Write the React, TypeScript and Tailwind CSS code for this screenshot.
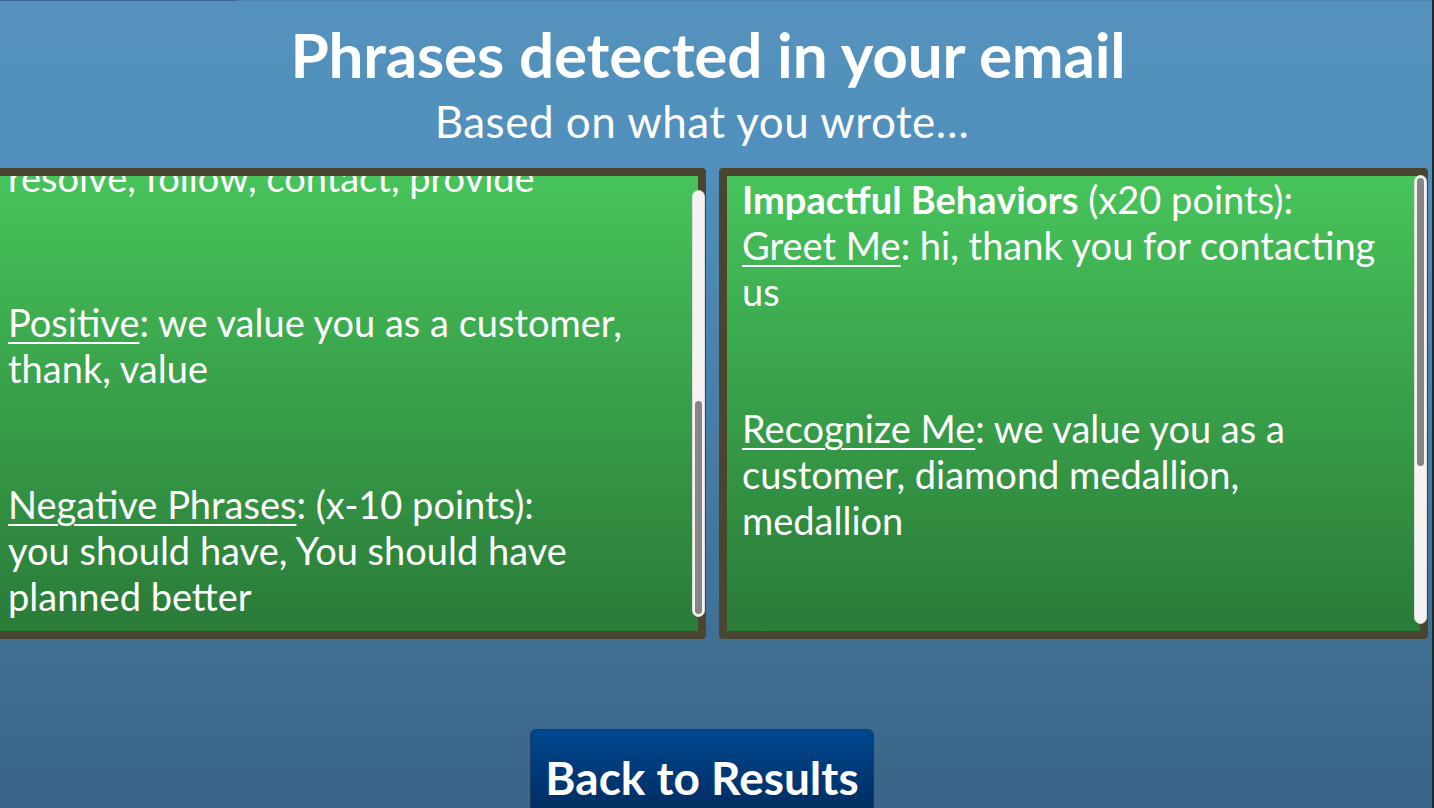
import React from "react";

const font = { fontFamily: "Lato, 'Noto Sans', sans-serif" };

function Scrollbar({ thumb, end }: { thumb: number; end?: boolean }) {
  return (
    <div className={`flex w-[13px] flex-col rounded-full border border-[#dcdcdc] bg-[#f3f3f3] ${end ? "justify-end" : "justify-start"}`}>
      <div
        className="rounded-full border-2 border-[#f3f3f3] bg-[#858585]"
        style={{ height: thumb }}
      />
    </div>
  );
}

function U({ children }: { children: React.ReactNode }) {
  return <span className="underline decoration-2 underline-offset-[5px]">{children}</span>;
}

export default function App() {
  return (
    <div className="flex h-[808px] w-full overflow-hidden text-white" style={font}>
      <div className="flex min-w-0 flex-1 flex-col overflow-hidden bg-gradient-to-b from-[#5592be] via-[#5190bc] via-20% to-[#3a6487]">
        <div className="flex h-px shrink-0">
          <div className="w-[237px] bg-[#3d6893]" />
          <div className="flex-1 bg-[#4d83b1]" />
        </div>

        <div className="-ml-[15px] flex w-[1434px] flex-col items-center">
          <h1 className="ml-[12px] mt-[22px] text-[62px] font-bold leading-none tracking-[-0.2px]">
            Phrases detected in your email
          </h1>
          <p className="mt-[14px] text-[44px] leading-none tracking-[0.5px]">Based on what you wrote…</p>

          <div className="mt-[25px] flex w-full gap-[13px]">
            <div className="relative flex h-[471px] w-[721px] shrink-0 rounded-[4px] border-8 border-[#4a4530] bg-gradient-to-b from-[#47c45b] to-[#2a7b38]">
              <div className="flex-1 overflow-hidden pl-[15px] pr-[40px] text-[38px] leading-[46px]">
                <div className="-mt-[22px]">
                  <p>resolve, follow, contact, provide</p>
                  <p className="mt-[99px]">
                    <U>Positive</U>: we value you as a customer, thank, value
                  </p>
                  <p className="mt-[90px]">
                    <U>Negative Phrases</U>: (x-10 points):
                    <br />
                    you should have, You should have planned better
                  </p>
                </div>
              </div>
              <div className="absolute right-[-7px] top-[14px] bottom-[14px] flex">
                <Scrollbar thumb={217} end />
              </div>
            </div>

            <div className="relative flex h-[471px] w-[709px] shrink-0 rounded-[4px] border-8 border-[#4a4530] bg-gradient-to-b from-[#47c45b] to-[#2a7b38]">
              <div className="flex-1 overflow-hidden pl-[15px] pr-[24px] text-[38px] leading-[46px]">
                <p>
                  <b>Impactful Behaviors</b> (x20 points):
                  <br />
                  <U>Greet Me</U>: hi, thank you for contacting us
                </p>
                <p className="mt-[91px]">
                  <U>Recognize Me</U>: we value you as a customer, diamond medallion, medallion
                </p>
              </div>
              <div className="absolute right-[-7px] top-[-1px] bottom-[7px] flex">
                <Scrollbar thumb={292} />
              </div>
            </div>
          </div>

          <button className="mt-[90px] shrink-0 self-center rounded-[6px] border border-[#1c3a5e] bg-gradient-to-b from-[#00488f] via-[#003570] to-[#002650] px-[14px] pb-[40px] pt-[25px] text-[46px] font-bold leading-none text-white">
            Back to Results
          </button>
        </div>
      </div>
      <div className="w-[2px] shrink-0 bg-[#262626]" />
    </div>
  );
}
